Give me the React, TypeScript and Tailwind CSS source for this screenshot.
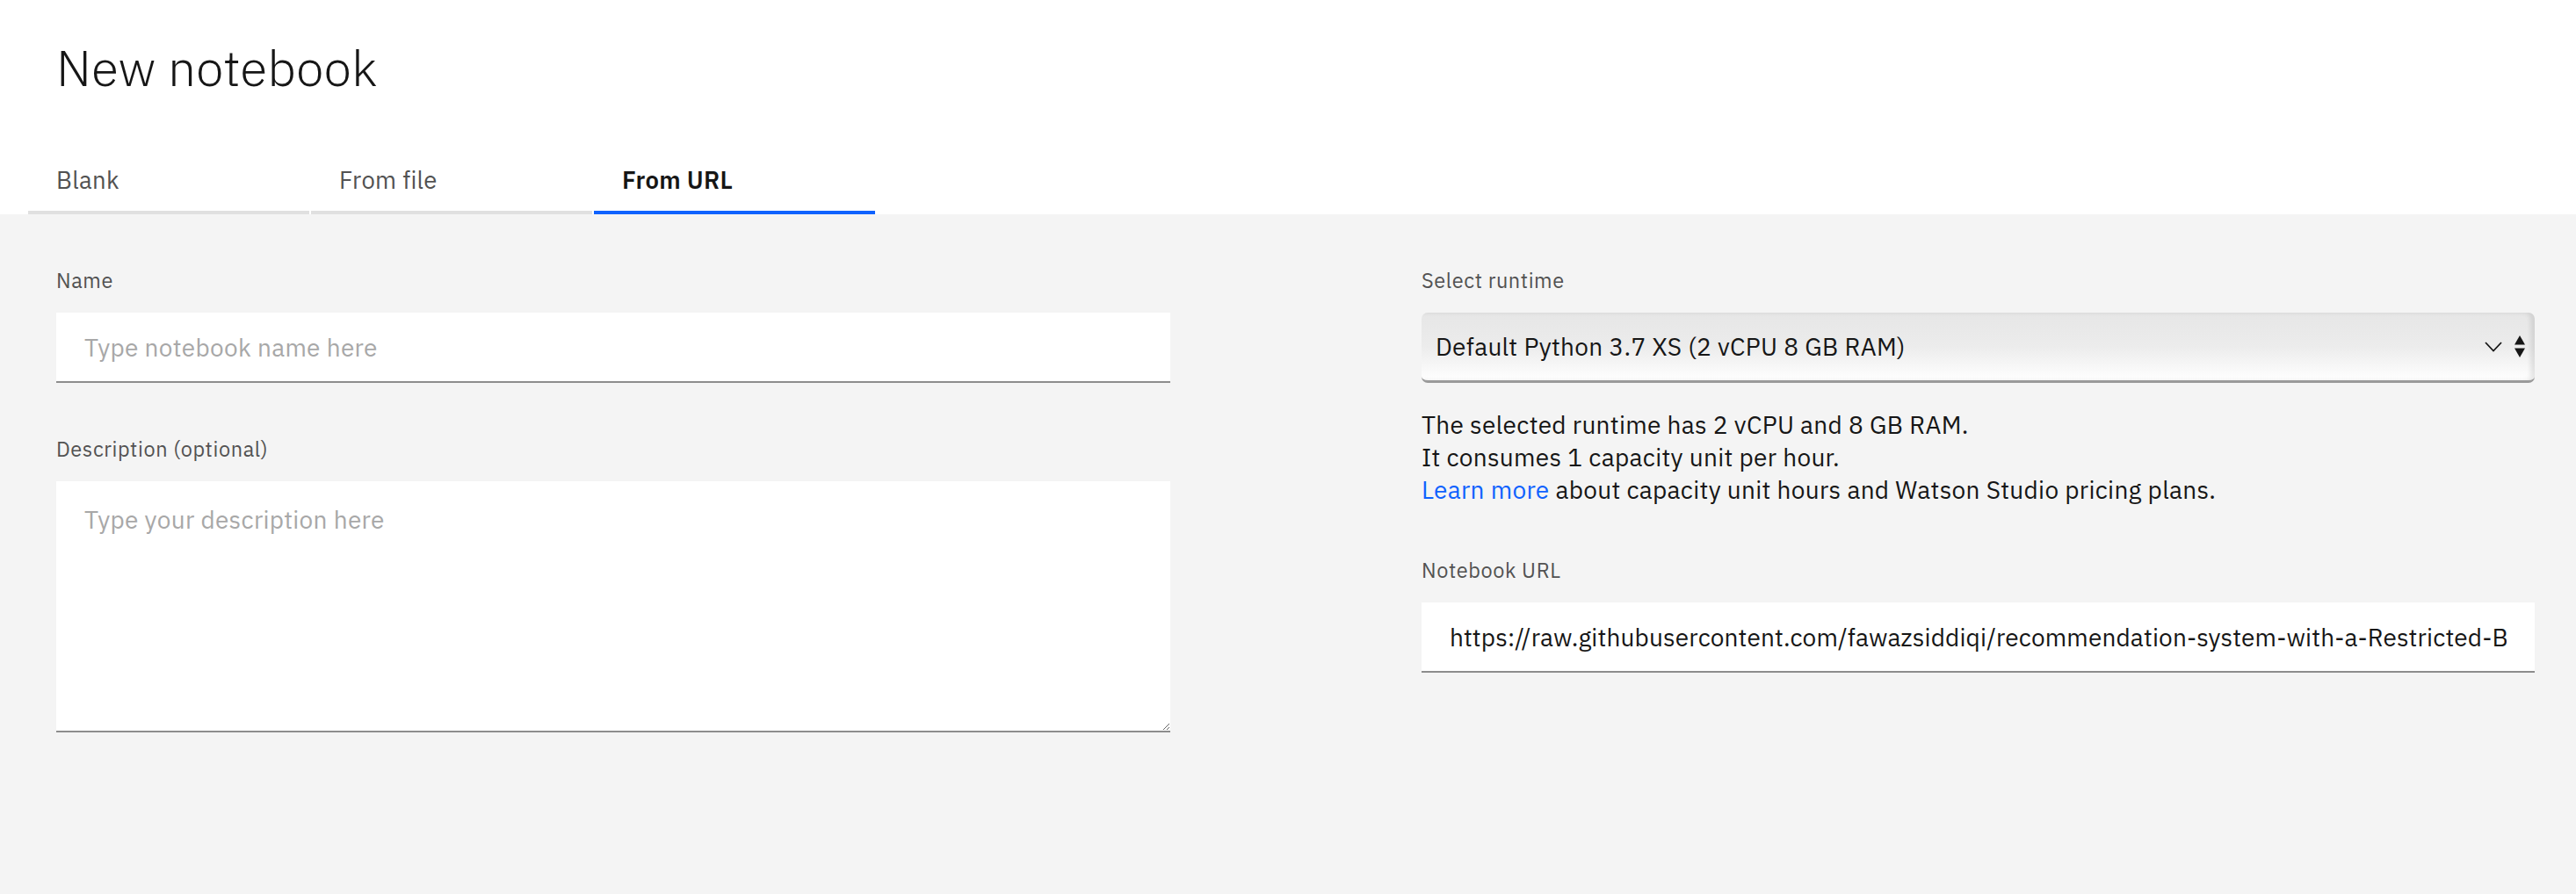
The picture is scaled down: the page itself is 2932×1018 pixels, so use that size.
const font = "font-['IBM_Plex_Sans','Roboto','Liberation_Sans',sans-serif]";

function Label({ children }: { children: React.ReactNode }) {
  return (
    <label className="block text-[23.5px] leading-[30px] tracking-[0.6px] text-[#525252] mb-[22px]">{children}</label>
  );
}

function Tab({ label, active }: { label: string; active?: boolean }) {
  return (
    <div
      className={
        'w-[320px] mr-[2px] pl-[32px] pb-[18px] text-[27.5px] leading-[34px] tracking-[0.3px] border-b-4 ' +
        (active ? 'border-[#0f62fe] text-[#161616] font-semibold' : 'border-[#e0e0e0] text-[#525252]')
      }
    >
      {label}
    </div>
  );
}

export default function App() {
  return (
    <div className={`min-h-screen flex flex-col bg-white ${font}`}>
      {/* Header */}
      <div className="bg-white">
        <h1 className="px-[64px] pt-[39px] text-[57px] leading-[76px] font-light text-[#161616]">New notebook</h1>
        <div className="flex pl-[32px] mt-[73px]">
          <Tab label="Blank" />
          <Tab label="From file" />
          <Tab label="From URL" active />
        </div>
      </div>

      {/* Form */}
      <div className="flex-1 bg-[#f4f4f4] pl-[64px] pr-[47px] pt-[60px] grid grid-cols-[1268px_1267px] gap-x-[286px] content-start">
        <div className="flex flex-col">
          <Label>Name</Label>
          <input
            placeholder="Type notebook name here"
            className="h-[80px] w-full bg-white px-[32px] text-[28px] tracking-[0.3px] text-[#161616] placeholder:text-[#a8a8a8] border-b-2 border-[#8d8d8d] outline-none"
          />
          <div className="mt-[60px]">
            <Label>Description (optional)</Label>
          </div>
          <textarea
            placeholder="Type your description here"
            className="h-[286px] w-full bg-white px-[32px] pt-[24px] text-[28px] leading-[40px] tracking-[0.3px] text-[#161616] placeholder:text-[#a8a8a8] border-b-2 border-[#8d8d8d] outline-none"
          />
        </div>

        <div className="flex flex-col">
          <Label>Select runtime</Label>
          <div className="h-[80px] flex items-center rounded-[7px] bg-gradient-to-b from-[#e6e6e6] via-[#ececec] to-white border-b-[3px] border-[#9a9a9a] shadow-[inset_-5px_0_5px_rgba(0,0,0,0.09)] pl-[16px] pr-[11px]">
            <span className="flex-1 text-[28px] tracking-[0.3px] text-[#161616]">Default Python 3.7 XS (2 vCPU 8 GB RAM)</span>
            <svg width="20" height="12" viewBox="0 0 20 12" className="mr-[14px]">
              <path d="M1 1 L10 10.5 L19 1" fill="none" stroke="#161616" strokeWidth="1.8" />
            </svg>
            <svg width="12" height="25" viewBox="0 0 12 25">
              <path d="M6 0 L12 10.5 L0 10.5 Z" fill="#161616" />
              <path d="M6 25 L12 14.5 L0 14.5 Z" fill="#161616" />
            </svg>
          </div>

          <div className="mt-[29px] text-[28px] leading-[37px] tracking-[0.3px] text-[#161616]">
            <p>The selected runtime has 2 vCPU and 8 GB RAM.</p>
            <p>It consumes 1 capacity unit per hour.</p>
            <p>
              <a className="text-[#0f62fe]">Learn more</a> about capacity unit hours and Watson Studio pricing plans.
            </p>
          </div>

          <div className="mt-[58px]">
            <Label>Notebook URL</Label>
          </div>
          <input
            readOnly
            value="https://raw.githubusercontent.com/fawazsiddiqi/recommendation-system-with-a-Restricted-Boltzmann-Machine-using-tensorflow/master/notebooks/recommendation-system-with-a-Restricted-Boltzmann-Machine-using-tensorflow.ipynb"
            className="h-[80px] w-full bg-white px-[32px] text-[28px] tracking-[0.15px] text-[#161616] border-b-2 border-[#8d8d8d] outline-none"
          />
        </div>
      </div>
    </div>
  );
}
